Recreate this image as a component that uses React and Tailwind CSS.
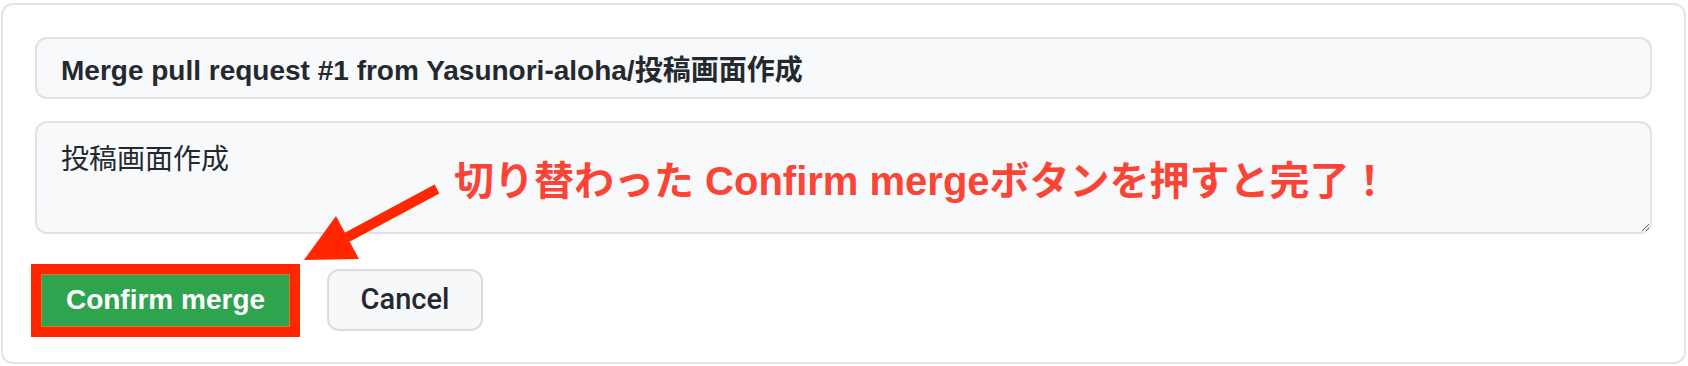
const FONT = "font-['Liberation_Sans','Noto_Sans_CJK_JP',sans-serif]";

const MergeForm = () => {
  return (
    <div className="rounded-[12px] border-2 border-[#e1e4e8] bg-white px-8 pt-8 pb-[31px] flex flex-col">
      {/* commit title */}
      <input
        readOnly
        value="Merge pull request #1 from Yasunori-aloha/投稿画面作成"
        className="h-[62px] w-full rounded-[12px] border-2 border-[#dfe2e6] bg-[#f8f9fb] px-6 text-[28px] font-bold text-[#24292f] outline-none"
      />

      {/* commit body */}
      <textarea
        readOnly
        value="投稿画面作成"
        className="mt-[22px] h-[113px] w-full resize-y rounded-[12px] border-2 border-[#dfe2e6] bg-[#f8f9fb] px-6 py-4 text-[28px] leading-[42px] text-[#24292f] outline-none"
      />

      <div className="mt-[35px] flex h-[62px] items-center">
        <div className="-ml-1 flex h-[73px] w-[269px] border-[10px] border-[#ff2600]">
          <button className="flex flex-1 items-center justify-center border border-[#cf7a2e] bg-[#2ea44f] text-[28px] font-bold text-white">
            Confirm merge
          </button>
        </div>
        <button className="ml-[27px] h-[62px] w-[156px] rounded-[12px] border-2 border-[#d8dde2] bg-[#f6f8fa] font-['Roboto',sans-serif] text-[29px] font-medium text-[#24292f]">
          Cancel
        </button>
      </div>
    </div>
  );
};

const App = () => {
  return (
    <div className={`relative h-[366px] w-[1688px] bg-white pt-[3px] pl-[1px] pr-[2px] ${FONT}`}>
      <MergeForm />

      {/* annotation overlay */}
      <svg
        className="pointer-events-none absolute left-[290px] top-[175px]"
        width="160"
        height="95"
        viewBox="0 0 160 95"
      >
        <line x1="147" y1="14" x2="52" y2="65" stroke="#ff2600" strokeWidth="10" />
        <polygon points="14,85 46,41 69,84" fill="#ff2600" />
      </svg>
      <div className="pointer-events-none absolute left-[454px] top-[161px] whitespace-nowrap text-[40px] font-bold leading-none text-[#fa4436]">
        切り替わった Confirm mergeボタンを押すと完了！
      </div>
    </div>
  );
};

export default App;
